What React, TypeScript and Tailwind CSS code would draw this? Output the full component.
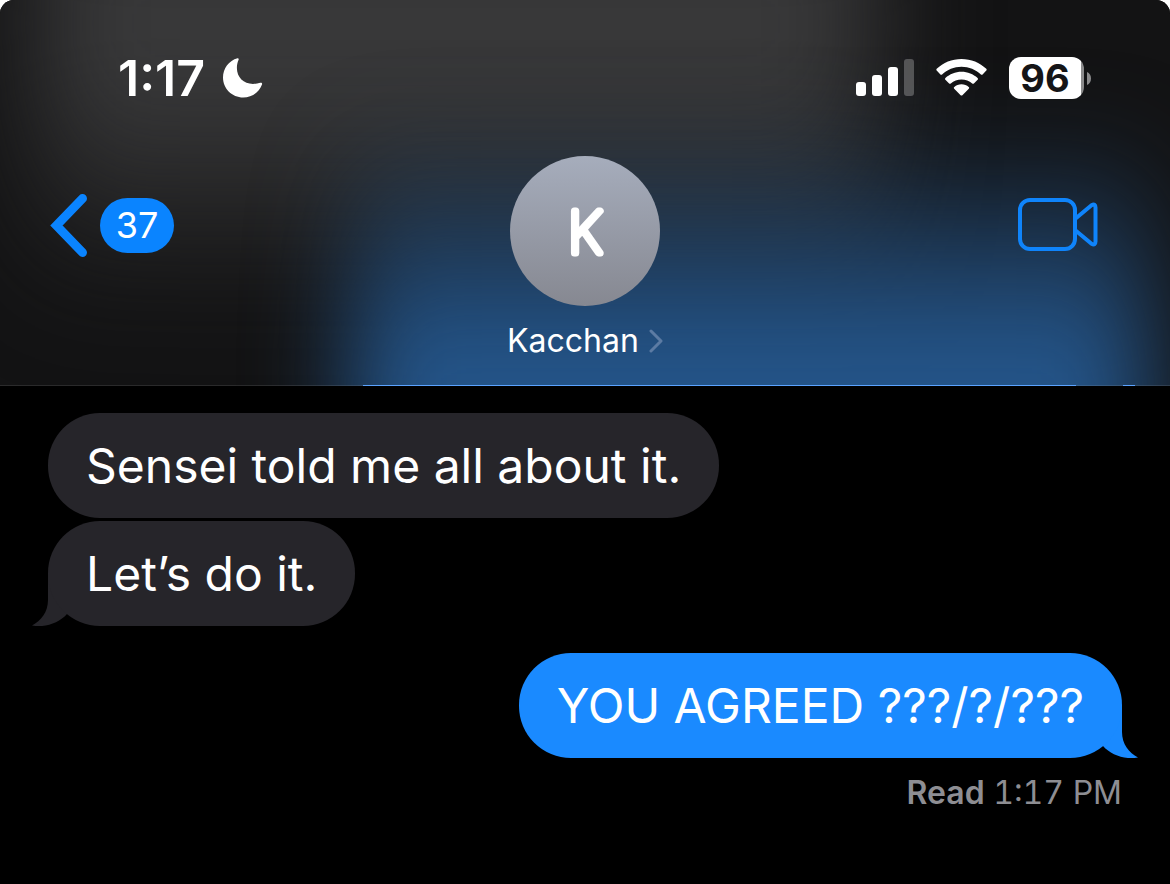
import React from 'react';
import clsx from 'clsx';

interface Message {
	id: number;
	text: string;
	mine?: boolean;
	tail?: boolean;
}

const messages: Message[] = [
	{ id: 1, text: 'Sensei told me all about it.' },
	{ id: 2, text: 'Let’s do it.', tail: true },
	{ id: 3, text: 'YOU AGREED ???/?/???', mine: true, tail: true }
];

function StatusBar() {
	return (
		<div className="flex h-[42px] items-center justify-between pl-[118px] pr-[79px]">
			<div className="flex items-center gap-[18px]">
				<time className="text-[50px] leading-[42px] font-semibold">1:17</time>
				<svg width="40" height="40" viewBox="0 0 40 40" fill="currentColor" aria-label="Do not disturb">
					<path d="M14.5 .3C6 2.600 0 10.500 0 19.500C0 30.500 9 39.500 20.200 39.500C28.500 39.500 36 34.500 39 26.600C39.500 25.300 38.600 24.300 37.200 24.800C34.800 25.700 32.500 25.900 30 25.900C20.500 25.900 13.900 19.300 13.900 10C13.900 7 14.500 4.300 15.500 2C16 .8 15.500 .1 14.500 .3Z" />
				</svg>
			</div>
			<div className="flex items-center gap-[22px]">
				<svg width="58" height="38" viewBox="0 0 58 38" fill="currentColor" aria-label="Signal">
					<rect x="0" y="23" width="10" height="14" rx="3" />
					<rect x="16" y="16" width="10" height="21" rx="3" />
					<rect x="32" y="8" width="10" height="29" rx="3" />
					<rect x="48" y="0" width="10" height="37" rx="3" opacity=".25" />
				</svg>
				<svg width="51" height="38" viewBox="0 0 51 38" fill="currentColor" aria-label="Wi-Fi">
					<path d="M25.500 7.800C33 7.800 39.800 10.700 44.900 15.400C45.400 15.900 46.100 15.900 46.600 15.400L50.300 11.600C50.800 11.100 50.800 10.300 50.300 9.800C43.800 3.700 35.100 0 25.500 0S7.200 3.700 .7 9.800C.2 10.300 .2 11.100 .7 11.600L4.400 15.400C4.900 15.900 5.600 15.900 6.100 15.400C11.200 10.700 18 7.800 25.500 7.800Z" />
					<path d="M25.500 20.500C29.600 20.500 33.300 22 36.200 24.500C36.700 25 37.400 24.900 37.900 24.500L41.600 20.700C42.100 20.200 42.100 19.400 41.600 18.900C37.300 15.100 31.700 12.700 25.500 12.700S13.700 15.100 9.400 18.900C8.900 19.400 8.900 20.200 9.400 20.700L13.100 24.500C13.600 24.900 14.300 25 14.800 24.500C17.700 22 21.400 20.500 25.500 20.500Z" />
					<path d="M32.800 29.700C33.300 29.200 33.300 28.400 32.700 28C30.800 26.300 28.300 25.300 25.500 25.300S20.200 26.300 18.300 28C17.700 28.400 17.700 29.200 18.200 29.700L24.600 36.200C25.100 36.700 25.900 36.700 26.400 36.200Z" />
				</svg>
				<div className="flex items-center gap-[3px]">
					<span className="w-[75px] rounded-[12px] bg-[linear-gradient(to_right,white_72px,#8a8a8b_72px)] pr-[3px] text-center text-[38px] leading-[42px] font-bold text-[#151517]">
						96
					</span>
					<svg width="4" height="13" viewBox="0 0 4 13" fill="#8a8a8b" aria-hidden="true">
						<path d="M0 0C2.500 1 4 3.500 4 6.500S2.500 12 0 13Z" />
					</svg>
				</div>
			</div>
		</div>
	);
}

function NavBar() {
	return (
		<nav className="mt-[57px] grid grid-cols-[1fr_auto_1fr] items-start pl-[50px] pr-[72px]">
			<button className="mt-[37px] flex items-center gap-3 justify-self-start" aria-label="Back, 37 unread">
				<svg width="38" height="64" viewBox="0 0 38 64" fill="none" stroke="#0a84ff" strokeWidth="9" strokeLinecap="round" strokeLinejoin="miter">
					<path d="M32.500 5.500L6.500 32.500L32.500 59.500" />
				</svg>
				<span className="flex h-[55px] w-[74px] items-center justify-center rounded-full bg-[#0a84ff] text-[36px] leading-none">
					37
				</span>
			</button>
			<button className="ml-[22px] flex flex-col items-center">
				<svg width="150" height="150" viewBox="0 0 150 150" aria-hidden="true">
					<defs>
						<linearGradient id="avatar" x1="0" y1="0" x2="0" y2="1">
							<stop offset="0" stopColor="#a6adbc" />
							<stop offset="1" stopColor="#868891" />
						</linearGradient>
					</defs>
					<circle cx="75" cy="75" r="75" fill="url(#avatar)" />
					<text
						x="75"
						y="97"
						textAnchor="middle"
						className="fill-white stroke-white font-['Inter',sans-serif] text-[57px] font-thin"
						strokeWidth="7"
						strokeLinejoin="round"
					>
						K
					</text>
				</svg>
				<span className="mt-[15px] flex items-center gap-2.5">
					<span className="text-[32px] leading-10">Kacchan</span>
					<svg width="14" height="24" viewBox="0 0 14 24" fill="none" stroke="#5c7ba3" strokeWidth="3" strokeLinecap="round" strokeLinejoin="round">
						<path d="M2 2L12 12L2 22" />
					</svg>
				</span>
			</button>
			<button className="mt-[42px] justify-self-end" aria-label="FaceTime video">
				<svg width="80" height="54" viewBox="0 0 80 54" fill="none" stroke="#0f84fb" strokeWidth="4" strokeLinejoin="round">
					<rect x="2" y="2" width="55" height="49" rx="10" />
					<path d="M57 21L73.500 7.200Q77.500 5 77.500 9.500V43.500Q77.500 48 73.500 45.800L57 32" />
				</svg>
			</button>
		</nav>
	);
}

function Header() {
	return (
		<header className="relative isolate overflow-hidden bg-[#131314] pt-[57px]">
			{/* colours of the thread showing through the frosted bar */}
			<div className="absolute -top-24 left-[3%] -z-10 h-[400px] w-[72%] bg-linear-to-b from-[#39393a] from-45% to-transparent blur-[55px]" />
			<div className="absolute top-[110px] left-[30%] -z-10 h-[400px] w-[68%] bg-linear-to-b from-transparent from-5% to-[#24558a] to-60% blur-[48px]" />
			<StatusBar />
			<NavBar />
			<div className="mt-[24px] flex h-px bg-white/10">
				<span className="ml-[31%] w-[61%] bg-[#5ba3ff]" />
				<span className="ml-[4%] w-[1%] bg-[#5ba3ff]" />
			</div>
		</header>
	);
}

function Bubble({ text, mine, tail }: Message) {
	return (
		<div
			className={clsx(
				'relative w-fit rounded-[52px] px-[38px] pt-[21px] pb-[20px] text-[48px] leading-[64px]',
				mine ? 'mt-6 self-end bg-[#1a8aff]' : 'bg-[#26252a]'
			)}
		>
			{text}
			{tail && (
				<svg
					width="60"
					height="52"
					viewBox="0 0 60 52"
					aria-hidden="true"
					className={clsx(
						'absolute bottom-0 -z-10',
						mine ? '-right-4 -scale-x-100 fill-[#1a8aff]' : '-left-4 fill-[#26252a]'
					)}
				>
					<path d="M16 0V26C16 38 9 47 0 51.500C13 54 27 49 35 40L60 20V0Z" />
				</svg>
			)}
		</div>
	);
}

export default function App() {
	return (
		<div className="min-h-screen bg-white font-['Inter',sans-serif] text-white">
			<main className="flex min-h-screen flex-col overflow-hidden rounded-t-[14px] bg-black">
				<Header />
				<section className="relative isolate flex flex-col gap-[3px] px-12 pt-[27px] pb-16">
					{messages.map((m) => (
						<Bubble key={m.id} {...m} />
					))}
					<p className="mt-3 self-end text-[32px] leading-10 text-[#8e8e93] tabular-nums">
						<span className="font-semibold">Read</span> 1:17 PM
					</p>
				</section>
			</main>
		</div>
	);
}
